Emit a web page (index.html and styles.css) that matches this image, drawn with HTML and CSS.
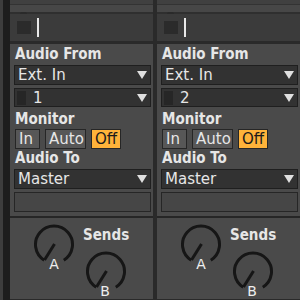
FILE: index.html
```html
<!DOCTYPE html>
<html lang="en">
	<head>
		<meta charset="UTF-8" />
		<title>Tracks</title>
		<link rel="stylesheet" href="styles.css">
	</head>
	<body>
		<div class="edge"><div class="edge-light"></div><div class="edge-dark"></div></div>

		<div class="track">
			<div class="head">
				<div class="head-top"></div>
				<div class="head-bar"></div>
				<div class="head-line"><span class="notch"></span></div>
				<div class="head-main"><span class="slot"></span><span class="cursor"></span></div>
				<div class="head-sep"></div>
			</div>
			<div class="io">
				<div class="label first">Audio From</div>
				<div class="drop">Ext. In<span class="arrow"></span></div>
				<div class="drop second"><span class="chip"></span><span class="num">1</span><span class="arrow"></span></div>
				<div class="label monitor">Monitor</div>
				<div class="buttons">
					<span class="btn btn-in">In</span>
					<span class="btn btn-auto">Auto</span>
					<span class="btn btn-off">Off</span>
				</div>
				<div class="label to">Audio To</div>
				<div class="drop">Master<span class="arrow"></span></div>
				<div class="box"></div>
			</div>
			<div class="divider"></div>
			<div class="sends">
				<svg class="knob knob-a" width="42" height="48" viewBox="0 0 42 48">
					<path d="M11.2 36.2 A18.5 18.5 0 1 1 30.8 36.2" fill="none" stroke="#161616" stroke-width="3" />
					<line x1="21.5" y1="20" x2="11.5" y2="36" stroke="#161616" stroke-width="3" />
					<text x="21" y="45" text-anchor="middle">A</text>
				</svg>
				<div class="sends-col">
					<div class="sends-title">Sends</div>
					<svg class="knob knob-b" width="42" height="48" viewBox="0 0 42 48">
						<path d="M11.2 36.2 A18.5 18.5 0 1 1 30.8 36.2" fill="none" stroke="#161616" stroke-width="3" />
						<line x1="21.5" y1="20" x2="11.5" y2="36" stroke="#161616" stroke-width="3" />
						<text x="20" y="45" text-anchor="middle">B</text>
					</svg>
				</div>
			</div>
		</div>

		<div class="gutter"></div>

		<div class="track">
			<div class="head">
				<div class="head-top"></div>
				<div class="head-bar"></div>
				<div class="head-line"><span class="notch"></span></div>
				<div class="head-main"><span class="slot"></span><span class="cursor"></span></div>
				<div class="head-sep"></div>
			</div>
			<div class="io">
				<div class="label first">Audio From</div>
				<div class="drop">Ext. In<span class="arrow"></span></div>
				<div class="drop second"><span class="chip"></span><span class="num">2</span><span class="arrow"></span></div>
				<div class="label monitor">Monitor</div>
				<div class="buttons">
					<span class="btn btn-in">In</span>
					<span class="btn btn-auto">Auto</span>
					<span class="btn btn-off">Off</span>
				</div>
				<div class="label to">Audio To</div>
				<div class="drop">Master<span class="arrow"></span></div>
				<div class="box"></div>
			</div>
			<div class="divider"></div>
			<div class="sends">
				<svg class="knob knob-a" width="42" height="48" viewBox="0 0 42 48">
					<path d="M11.2 36.2 A18.5 18.5 0 1 1 30.8 36.2" fill="none" stroke="#161616" stroke-width="3" />
					<line x1="21.5" y1="20" x2="11.5" y2="36" stroke="#161616" stroke-width="3" />
					<text x="21" y="45" text-anchor="middle">A</text>
				</svg>
				<div class="sends-col">
					<div class="sends-title">Sends</div>
					<svg class="knob knob-b" width="42" height="48" viewBox="0 0 42 48">
						<path d="M11.2 36.2 A18.5 18.5 0 1 1 30.8 36.2" fill="none" stroke="#161616" stroke-width="3" />
						<line x1="21.5" y1="20" x2="11.5" y2="36" stroke="#161616" stroke-width="3" />
						<text x="20" y="45" text-anchor="middle">B</text>
					</svg>
				</div>
			</div>
		</div>
	</body>
</html>
```

FILE: styles.css
```css
body {
	display: flex;
	margin: 0;
	width: 300px;
	height: 300px;
	overflow: hidden;
	background-color: #2a2a2a;
	font-family: "DejaVu Sans", sans-serif;
	font-size: 15px;
	color: #e6e6e6;
}
.edge {
	display: flex;
	width: 10px;
	flex-shrink: 0;
}
.edge-light {
	width: 3px;
	background-color: #3d3d3d;
}
.edge-dark {
	width: 7px;
	background-color: #1d1d1d;
}
.gutter {
	width: 4px;
	flex-shrink: 0;
	background-color: #2a2a2a;
}
.track {
	display: flex;
	flex-direction: column;
	width: 143px;
	flex-shrink: 0;
}
.head-top {
	height: 4px;
	background-color: #404040;
	border-bottom: 1px solid #333333;
}
.head-bar {
	height: 8px;
	background-color: #474747;
}
.head-line {
	height: 2px;
	background-color: #2f2f2f;
	padding-left: 10px;
}
.notch {
	display: block;
	width: 7px;
	height: 2px;
	margin-top: -1px;
	border-radius: 2px 2px 0 0;
	background-color: #2a2a2a;
}
.head-main {
	display: flex;
	align-items: center;
	height: 27px;
	padding-left: 7px;
	background-color: #3b3b3b;
}
.slot {
	width: 14px;
	height: 13px;
	background-color: #2b2b2b;
}
.cursor {
	width: 2px;
	height: 19px;
	margin-left: 6px;
	background-color: #e8e8e8;
}
.head-sep {
	height: 3px;
	background-color: #2a2a2a;
}
.io {
	display: flex;
	flex-direction: column;
	height: 172px;
	box-sizing: border-box;
	padding: 0 2px 0 4px;
	background-color: #4a4a4a;
}
.label {
	font-family: "DejaVu Sans Condensed", "DejaVu Sans", sans-serif;
	font-stretch: condensed;
	font-weight: bold;
	line-height: 17px;
	padding-left: 1px;
}
.first {
	padding-top: 2px;
	padding-bottom: 2px;
}
.monitor {
	padding-top: 4px;
	padding-bottom: 1px;
}
.to {
	padding-top: 1px;
	padding-bottom: 2px;
}
.drop {
	display: flex;
	align-items: center;
	height: 20px;
	box-sizing: border-box;
	padding-left: 3px;
	line-height: 18px;
	background-color: #323232;
	border: 1px solid #1f1f1f;
}
.drop.second {
	height: 19px;
	margin-top: 3px;
	padding-left: 2px;
}
.chip {
	width: 9px;
	height: 14px;
	background-color: #262626;
}
.num {
	margin-left: 7px;
}
.arrow {
	margin-left: auto;
	margin-right: 3px;
	width: 0;
	height: 0;
	border-left: 5px solid transparent;
	border-right: 5px solid transparent;
	border-top: 8px solid #e0e0e0;
}
.buttons {
	display: flex;
	gap: 5px;
	height: 20px;
	padding-left: 1px;
}
.btn {
	box-sizing: border-box;
	height: 20px;
	line-height: 18px;
	padding: 0 3px;
	background-color: #575757;
	border: 1px solid #262626;
}
.btn-in {
	width: 25px;
}
.btn-auto {
	width: 41px;
}
.btn-off {
	width: 30px;
	background-color: #ffb33a;
	color: #1a1a1a;
}
.box {
	height: 20px;
	box-sizing: border-box;
	margin-top: 3px;
	background-color: #464646;
	border: 1px solid #262626;
}
.divider {
	height: 2px;
	background-color: #262626;
}
.sends {
	display: flex;
	height: 81px;
	padding-left: 23px;
	background-color: #4a4a4a;
}
.knob {
	display: block;
}
.knob text {
	font-family: "DejaVu Sans", sans-serif;
	font-size: 14px;
	fill: #eeeeee;
}
.knob-a {
	margin-top: 6px;
}
.sends-col {
	margin-left: 8px;
}
.sends-title {
	margin-top: 9px;
	font-family: "DejaVu Sans Condensed", "DejaVu Sans", sans-serif;
	font-stretch: condensed;
	font-weight: bold;
	line-height: 17px;
}
.knob-b {
	margin-top: 7px;
	margin-left: 2px;
}
```
